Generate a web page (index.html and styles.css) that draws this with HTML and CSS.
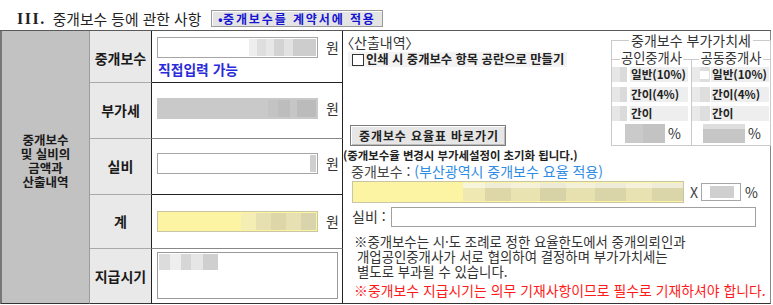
FILE: index.html
```html
<!DOCTYPE html>
<html lang="ko">
<head>
<meta charset="utf-8">
<title>중개보수 등에 관한 사항</title>
<link rel="stylesheet" href="styles.css">
</head>
<body>
<div class="title-row">
  <span class="roman">III.</span>
  <span class="title">중개보수 등에 관한 사항</span>
  <button class="apply-btn" type="button"><span class="bullet">•</span>중개보수를 계약서에 적용</button>
</div>

<div class="form">
  <div class="c1">중개보수<br>및 실비의<br>금액과<br>산출내역</div>

  <div class="c2 r1">중개보수</div>
  <div class="c3 r1">
    <div class="amount"><span class="field"><span class="blur blur-amt"></span></span><span class="won">원</span></div>
    <div class="hint">직접입력 가능</div>
  </div>

  <div class="c2 r2">부가세</div>
  <div class="c3 r2">
    <div class="amount"><span class="field readonly"><span class="blur blur-vat"></span></span><span class="won">원</span></div>
  </div>

  <div class="c2 r3">실비</div>
  <div class="c3 r3">
    <div class="amount"><span class="field"><span class="blur blur-cost"></span></span><span class="won">원</span></div>
  </div>

  <div class="c2 r4">계</div>
  <div class="c3 r4">
    <div class="amount"><span class="field yellow"><span class="blur blur-sum"></span></span><span class="won">원</span></div>
  </div>

  <div class="c2 r5">지급시기</div>
  <div class="c3 r5">
    <div class="memo"><span class="blur blur-memo"></span></div>
  </div>

  <div class="c4">
    <div class="calc-top">
      <div class="calc-left">
        <div class="calc-head"><span class="br">〈</span>산출내역<span class="br">〉</span></div>
        <label class="print-opt"><input type="checkbox" class="chk"><span>인쇄 시 중개보수 항목 공란으로 만들기</span></label>
        <button class="rate-btn" type="button">중개보수 요율표 바로가기</button>
      </div>
      <div class="vat">
        <div class="vat-legend">중개보수 부가가치세</div>
        <div class="vat-cols">
          <div class="vat-col first">
            <div class="vat-sub">공인중개사</div>
            <div class="opt"><span class="blur rb"></span><span class="opt-label">일반(10%)</span></div>
            <div class="opt"><span class="blur rb"></span><span class="opt-label">간이(4%)</span></div>
            <div class="opt"><span class="blur rb"></span><span class="opt-label">간이</span></div>
            <div class="rate"><span class="blur rate-box"></span><span class="pct">%</span></div>
          </div>
          <div class="vat-col second">
            <div class="vat-sub">공동중개사</div>
            <div class="opt"><span class="blur rb rb2"><span class="dot"></span></span><span class="opt-label">일반(10%)</span></div>
            <div class="opt"><span class="blur rb rb2"></span><span class="opt-label">간이(4%)</span></div>
            <div class="opt"><span class="blur rb rb2"></span><span class="opt-label">간이</span></div>
            <div class="rate"><span class="blur rate-box rate-box2"></span><span class="pct">%</span></div>
          </div>
        </div>
      </div>
    </div>

    <div class="note-small">(중개보수율 변경시 부가세설정이 초기화 됩니다.)</div>
    <div class="fee-line"><span class="lbl">중개보수 :</span> <span class="region">(부산광역시 중개보수 요율 적용)</span></div>
    <div class="fee-row">
      <span class="field yellow wide"><span class="blur blur-fee"></span></span>
      <span class="x">X</span>
      <span class="field pct-field"><span class="blur blur-pct"></span></span>
      <span class="pct-sign">%</span>
    </div>
    <div class="cost-row"><span class="lbl">실비 :</span><span class="field cost"></span></div>
    <div class="notes">※중개보수는 시·도 조례로 정한 요율한도에서 중개의뢰인과<br><span class="ind">개업공인중개사가 서로 협의하여 결정하며 부가가치세는</span><br><span class="ind">별도로 부과될 수 있습니다.</span></div>
    <div class="warn">※중개보수 지급시기는 의무 기재사항이므로 필수로 기재하셔야 합니다.</div>
  </div>
</div>
</body>
</html>
```

FILE: styles.css
```css
* { box-sizing: border-box; }
html, body { margin: 0; padding: 0; }
body {
  width: 773px;
  height: 305px;
  overflow: hidden;
  background: #fff;
  color: #222;
  font-family: "Noto Sans CJK KR", "Noto Sans", sans-serif;
  font-size: 14px;
  line-height: 1.2;
}

/* ---------- title ---------- */
.title-row {
  height: 30px;
  display: flex;
  align-items: center;
  padding: 7px 0 0 17px;
}
.roman {
  font-family: "Liberation Serif", serif;
  font-weight: 700;
  font-size: 16px;
  letter-spacing: 1.5px;
}
.title {
  font-size: 14.8px;
  margin-left: 7px;
  color: #222;
}
.apply-btn {
  margin-left: 10px;
  width: 172px;
  height: 17px;
  padding: 0 0 0 6px;
  background: #e4e4e4;
  border: 1px solid #9a9a9a;
  box-shadow: inset 1px 1px #fff;
  font: 700 12px/15px "Noto Sans CJK KR", sans-serif;
  color: #1414d2;
  letter-spacing: 1.9px;
  text-align: left;
  white-space: nowrap;
  overflow: hidden;
}
.bullet {
  font-family: "Liberation Sans", sans-serif;
  letter-spacing: 0.5px;
}

/* ---------- grid ---------- */
.form {
  display: grid;
  grid-template-columns: 90px 62px 191px 428px;
  grid-template-rows: 52px 56px 56px 54px 55px;
  width: 771px;
  border-top: 1px solid #5a5a5a;
}
.c1 {
  grid-column: 1;
  grid-row: 1 / 6;
  background: #c2c2c2;
  border-left: 2px solid #777;
  border-right: 1px solid #9c9c9c;
  border-bottom: 1px solid #333;
  display: flex;
  align-items: center;
  justify-content: center;
  text-align: center;
  padding-bottom: 12px;
  font-size: 12.5px;
  line-height: 14px;
  color: #1a1a1a;
  font-weight: 700;
}
.c2 {
  grid-column: 2;
  background: #e9e9e9;
  border-right: 1px solid #222;
  border-bottom: 1px solid #a9a9a9;
  display: flex;
  align-items: center;
  justify-content: center;
  color: #1a1a1a;
  font-weight: 700;
  font-size: 14px;
}
.c3 {
  grid-column: 3;
  border-right: 1px solid #222;
  border-bottom: 1px solid #777;
  padding-left: 5px;
}
.r1 { grid-row: 1; }
.r2 { grid-row: 2; }
.r3 { grid-row: 3; }
.r4 { grid-row: 4; }
.r5 { grid-row: 5; }
.c2.r1 { padding-top: 4px; }
.c2.r5 { border-bottom-color: #333; }
.c3.r1 { padding-top: 6px; border-bottom-color: #222; }
.c3.r2 { padding-top: 15px; border-bottom-color: #888; }
.c3.r3 { padding-top: 14px; border-bottom-color: #222; }
.c3.r4 { padding-top: 16px; border-bottom-color: #888; }
.c3.r5 { padding-top: 3px; border-bottom-color: #333; }

.amount {
  display: flex;
  align-items: center;
}
.field {
  display: flex;
  justify-content: flex-end;
  width: 161px;
  height: 21px;
  border: 1px solid #a6a6a6;
  background: #fff;
  padding: 1px;
}
.field.readonly { background: #c9c9c9; border-color: #c9c9c9; }
.field.yellow { background: #fcf4a2; border-color: #c8c6a4; }
.won { margin-left: 8px; color: #333; font-size: 14px; }
.hint {
  margin-top: 3px;
  color: #2a2ad8;
  font-weight: 700;
  font-size: 13.8px;
  line-height: 16px;
  padding-left: 1px;
}
.memo {
  width: 181px;
  height: 47px;
  border: 1px solid #9a9a9a;
  padding: 1px;
}

/* blurred (masked) values */
.blur { display: block; }
.blur-amt {
  width: 67px;
  background: linear-gradient(90deg, #eeeeee 0 12%, #dedede 12% 26%, #e7e7e7 26% 38%, #d3d3d3 38% 52%, #e2e2e2 52% 66%, #cdcdcd 66% 100%);
}
.blur-vat {
  width: 48px;
  background: linear-gradient(90deg, #c3c3c3 0 20%, #bdbdbd 20% 45%, #c6c6c6 45% 60%, #bbbbbb 60% 100%);
}
.blur-cost { width: 6px; background: #cfcfcf; }
.blur-sum {
  width: 75px;
  background: linear-gradient(90deg, #f4edb4 0 20%, #e6e0b0 20% 40%, #dcd6a8 40% 60%, #e6e0b2 60% 80%, #d9d4ac 80% 100%);
}
.blur-memo {
  width: 59px;
  height: 16px;
  background: linear-gradient(90deg, #dcdcdc 0 18%, #eeeeee 18% 38%, #d6d6d6 38% 55%, #e6e6e6 55% 75%, #cfcfcf 75% 100%);
}

/* ---------- calculation column ---------- */
.c4 {
  grid-column: 4;
  grid-row: 1 / 6;
  border-right: 1px solid #888;
  border-bottom: 1px solid #333;
  display: flex;
  flex-direction: column;
}
.calc-top {
  height: 116px;
  display: flex;
}
.calc-left {
  flex: 1;
  display: flex;
  flex-direction: column;
  align-items: flex-start;
  padding-left: 4px;
}
.calc-head {
  margin-top: 3px;
  line-height: 16px;
  font-size: 14px;
  color: #333;
}
.br { font-feature-settings: "palt"; }
.print-opt {
  margin-top: 2px;
  margin-left: 1px;
  height: 15px;
  display: flex;
  align-items: center;
  background: #f3f3f3;
  padding: 0 3px 0 4px;
  font-weight: 700;
  font-size: 12.3px;
  color: #222;
  white-space: nowrap;
}
.chk {
  appearance: none;
  -webkit-appearance: none;
  width: 12px;
  height: 12px;
  margin: 0 2px 0 0;
  border: 1px solid #333;
  background: #fff;
}
.rate-btn {
  margin-top: auto;
  margin-left: 3px;
  margin-bottom: 1px;
  width: 156px;
  height: 21px;
  padding: 0 0 0 8px;
  background: #e6e6e6;
  border: 1px solid #7a7a7a;
  box-shadow: inset 1px 1px #fff, inset -1px -1px #bcbcbc;
  font: 700 12px/17px "Noto Sans CJK KR", sans-serif;
  color: #222;
  letter-spacing: 0.9px;
  text-align: left;
  white-space: nowrap;
}

/* VAT box */
.vat {
  width: 160px;
  margin-top: 9px;
  margin-right: -1px;
  height: 106px;
  border: 1px solid #cacaca;
  display: flex;
  flex-direction: column;
}
.vat-legend {
  display: table;
  margin: -8px auto 0;
  padding: 0 2px;
  background: #fff;
  line-height: 14px;
  font-size: 14px;
  color: #333;
}
.vat-cols {
  display: flex;
  flex: 1;
  margin-top: 12px;
}
.vat-col {
  border-top: 1px solid #cacaca;
}
.vat-col.first { width: 80px; border-right: 1px solid #cacaca; }
.vat-col.second { width: 78px; }
.vat-sub {
  display: table;
  margin: -9px auto 0;
  padding: 0 1px;
  background: #fff;
  line-height: 13px;
  font-size: 13.3px;
  color: #333;
}
.opt {
  display: flex;
  height: 15px;
  margin-top: 4.5px;
}
.vat-sub + .opt { margin-top: 3px; }
.rb {
  width: 15px;
  margin-right: 3px;
  background: linear-gradient(90deg, #e6e6e6 0 50%, #dadada 50% 100%);
}
.rb2 { width: 18px; margin-right: 1px; display: flex; justify-content: center; align-items: center; background: linear-gradient(90deg, #e9e9e9 0 45%, #dedede 45% 100%); }
.dot { width: 9px; height: 8px; background: #fff; margin-left: 6px; }
.opt-label {
  width: 58px;
  background: #eeeeee;
  font-weight: 700;
  font-size: 11.6px;
  line-height: 15px;
  padding-left: 1px;
  color: #222;
  white-space: nowrap;
}
.rate {
  display: flex;
  align-items: center;
  margin-top: 3px;
  height: 19px;
  padding-left: 13px;
}
.rate-box {
  width: 40px;
  height: 19px;
  background: linear-gradient(90deg, #cacaca 0 45%, #c3c3c3 45% 100%);
}
.vat-col.second .rate { padding-left: 11px; }
.rate-box2 {
  width: 42px;
  background: linear-gradient(180deg, #dedede 0 25%, #c6c6c6 25% 100%);
}
.pct { margin-left: 3px; color: #333; font-size: 14px; }

/* lower part */
.note-small {
  margin-top: 1px;
  line-height: 14px;
  font-size: 11.4px;
  font-weight: 700;
  color: #222;
  white-space: nowrap;
}
.fee-line {
  line-height: 19px;
  padding-left: 8px;
  font-size: 14px;
  color: #444;
  white-space: nowrap;
}
.region { color: #2f8ce4; }
.fee-row {
  display: flex;
  align-items: center;
  height: 22px;
  padding-left: 9px;
}
.field.wide {
  width: 332px;
  height: 22px;
  padding: 1px 0 1px 0;
}
.blur-fee {
  width: 220px;
  background:
    linear-gradient(180deg, rgba(255,255,255,0.55) 0 30%, rgba(255,255,255,0) 30% 100%),
    linear-gradient(90deg, #efe8b3 0 10%, #ddd7a7 10% 22%, #e9e3b2 22% 35%, #d8d3a6 35% 47%, #e7e1b0 47% 60%, #dad5a8 60% 74%, #e8e2b2 74% 86%, #dbd6aa 86% 100%);
}
.x { margin-left: 6px; color: #444; font-size: 14px; }
.field.pct-field {
  width: 40px;
  height: 18px;
  margin-left: 3px;
  padding: 2px 6px 2px 0;
}
.blur-pct { width: 24px; background: #cfcfcf; }
.pct-sign { margin-left: 4px; color: #333; font-size: 14px; }
.cost-row {
  display: flex;
  align-items: center;
  margin-top: 3px;
  height: 21px;
  padding-left: 9px;
  font-size: 14px;
}
.cost-row .lbl { color: #333; width: 39px; }
.field.cost { width: 365px; height: 20px; border-color: #a0a0a0; }
.notes {
  margin-top: 7px;
  padding-left: 11px;
  line-height: 15px;
  font-size: 13.4px;
  color: #333;
  white-space: nowrap;
}
.ind { padding-left: 3px; }
.warn {
  margin-top: 4px;
  padding-left: 11px;
  line-height: 15px;
  font-size: 13.9px;
  color: #ff1a1a;
  white-space: nowrap;
}
```
